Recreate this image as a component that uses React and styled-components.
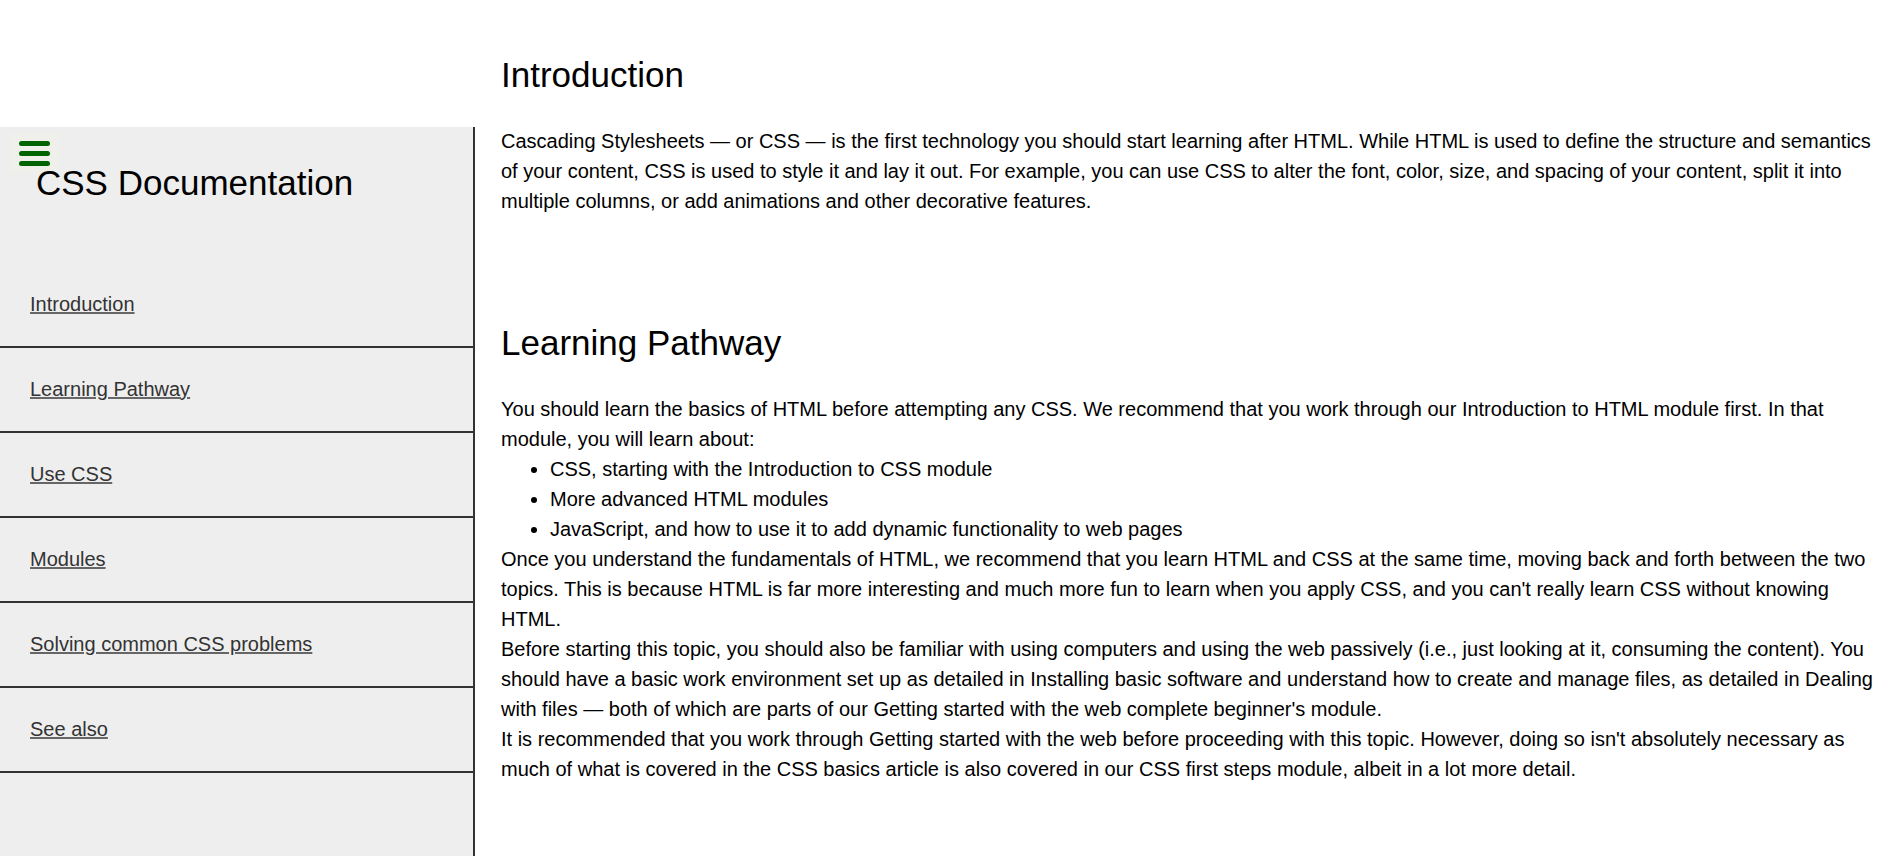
import React from 'react';
import styled, { createGlobalStyle } from 'styled-components';

const GlobalStyle = createGlobalStyle`
  body {
    margin: 0;
    background: #fff;
    font-family: 'Liberation Sans', Arial, sans-serif;
    color: #000;
  }
`;

const Page = styled.div`
  display: flex;
  align-items: flex-start;
  min-height: 100vh;
`;

const Sidebar = styled.nav`
  position: relative;
  flex: 0 0 475px;
  box-sizing: border-box;
  margin-top: 127px;
  height: calc(100vh - 127px);
  background-color: #eee;
  border-right: 2px solid #333;
`;

const MenuButton = styled.div`
  position: absolute;
  top: 6px;
  left: 10px;
  width: 48px;
  height: 40px;
  box-sizing: border-box;
  padding: 8px 0 0 9px;
  display: flex;
  flex-direction: column;
  gap: 5px;
  background-color: #f0f0ea;
`;

const MenuBar = styled.span`
  display: block;
  width: 31px;
  height: 5px;
  border-radius: 3px;
  background-color: #006400;
`;

const SidebarHeader = styled.header`
  height: 136px;
  box-sizing: border-box;
  padding: 36px 0 0 36px;
`;

const Title = styled.h1`
  margin: 0;
  font-size: 35px;
  font-weight: 400;
  line-height: 40px;
  position: relative;
`;

const NavList = styled.ul`
  list-style: none;
  margin: 0;
  padding: 0;
`;

const NavItem = styled.li`
  border-bottom: 2px solid #333;
`;

const NavLink = styled.a`
  display: block;
  padding: 30px 30px;
  font-size: 20px;
  line-height: 23px;
  color: #333;
  text-decoration: underline;
  text-decoration-color: #666;
`;

const Main = styled.main`
  flex: 1;
  min-width: 0;
  padding: 55px 8px 0 26px;
`;

const Section = styled.section`
  margin-bottom: 107px;
`;

const Heading = styled.h2`
  margin: 0 0 31px;
  font-size: 35px;
  font-weight: 400;
  line-height: 40px;
`;

const Text = styled.p`
  margin: 0;
  font-size: 20px;
  line-height: 30px;
`;

const Bullets = styled.ul`
  margin: 0;
  padding-left: 49px;
  font-size: 20px;
  line-height: 30px;
`;

const navItems = [
  'Introduction',
  'Learning Pathway',
  'Use CSS',
  'Modules',
  'Solving common CSS problems',
  'See also',
];

const App = () => {
  return (
    <>
      <GlobalStyle />
      <Page>
        <Sidebar>
          <MenuButton>
            <MenuBar />
            <MenuBar />
            <MenuBar />
          </MenuButton>
          <SidebarHeader>
            <Title>CSS Documentation</Title>
          </SidebarHeader>
          <NavList>
            {navItems.map((item) => (
              <NavItem key={item}>
                <NavLink href={'#' + item.replace(/ /g, '_')}>{item}</NavLink>
              </NavItem>
            ))}
          </NavList>
        </Sidebar>
        <Main>
          <Section id="Introduction">
            <Heading>Introduction</Heading>
            <Text>
              Cascading Stylesheets — or CSS — is the first technology you should start learning after HTML. While
              HTML is used to define the structure and semantics of your content, CSS is used to style it and lay it
              out. For example, you can use CSS to alter the font, color, size, and spacing of your content, split it
              into multiple columns, or add animations and other decorative features.
            </Text>
          </Section>
          <Section id="Learning_Pathway">
            <Heading>Learning Pathway</Heading>
            <Text>
              You should learn the basics of HTML before attempting any CSS. We recommend that you work through our
              Introduction to HTML module first. In that module, you will learn about:
            </Text>
            <Bullets>
              <li>CSS, starting with the Introduction to CSS module</li>
              <li>More advanced HTML modules</li>
              <li>JavaScript, and how to use it to add dynamic functionality to web pages</li>
            </Bullets>
            <Text>
              Once you understand the fundamentals of HTML, we recommend that you learn HTML and CSS at the same time,
              moving back and forth between the two topics. This is because HTML is far more interesting and much more
              fun to learn when you apply CSS, and you can't really learn CSS without knowing HTML.
            </Text>
            <Text>
              Before starting this topic, you should also be familiar with using computers and using the web passively
              (i.e., just looking at it, consuming the content). You should have a basic work environment set up as
              detailed in Installing basic software and understand how to create and manage files, as detailed in
              Dealing with files — both of which are parts of our Getting started with the web complete beginner's
              module.
            </Text>
            <Text>
              It is recommended that you work through Getting started with the web before proceeding with this topic.
              However, doing so isn't absolutely necessary as much of what is covered in the CSS basics article is also
              covered in our CSS first steps module, albeit in a lot more detail.
            </Text>
          </Section>
        </Main>
      </Page>
    </>
  );
};

export default App;
